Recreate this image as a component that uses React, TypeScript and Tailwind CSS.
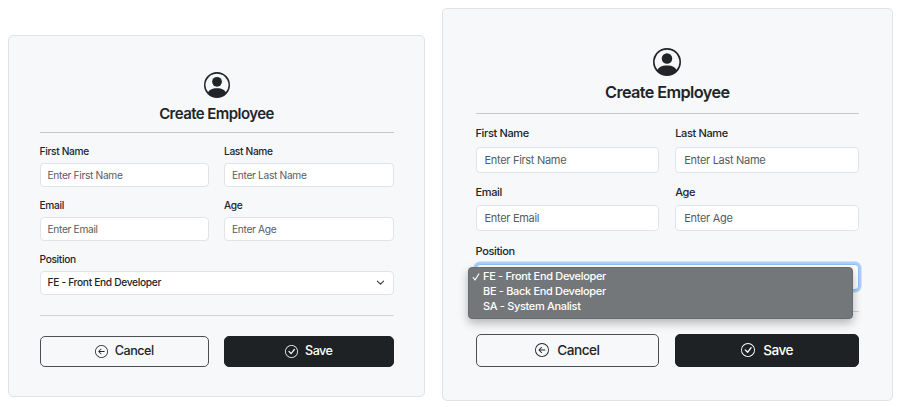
import React from "react";
import { BsArrowLeftCircle, BsCheckCircle, BsPersonCircle } from "react-icons/bs";

const compact = {
  card: "mt-[35px] h-[362px] w-[417px] px-[30.5px] pt-[36px]",
  avatar: "size-[26px]",
  title: "mt-[4px] h-[22px] text-[15px] leading-[24px] tracking-[-0.56px]",
  ruleTop: "mt-[8px]",
  fields: "mt-[9.5px] gap-x-[15px] gap-y-[10px]",
  label: "h-[16px] mb-[4px] text-[10.2px] leading-[16px] tracking-[-0.34px]",
  control: "h-[24px] px-[7px] text-[10.2px] tracking-[-0.32px]",
  ruleBottom: "mt-[20px]",
  actions: "mt-[20px] gap-[15px]",
  button: "h-[31px] gap-[7px] pt-px text-[12.6px] tracking-[-0.5px]",
  buttonIcon: "size-[13px] -mt-px",
};

const large: typeof compact = {
  card: "mt-[8px] h-[392.5px] w-[450.5px] px-[32.5px] pt-[39px]",
  avatar: "size-[28px]",
  title: "mt-[4.5px] h-[24.5px] text-[16.3px] leading-[23px] tracking-[-0.62px]",
  ruleTop: "mt-[8px]",
  fields: "mt-[11px] gap-x-[16px] gap-y-[11.4px]",
  label: "h-[17px] mb-[4.5px] text-[11px] leading-[17px] tracking-[-0.36px]",
  control: "h-[26px] px-[8px] text-[11px] tracking-[-0.3px]",
  ruleBottom: "mt-[21px]",
  actions: "mt-[21.5px] gap-[16px]",
  button: "h-[33px] gap-[8px] text-[13.6px] tracking-[-0.52px]",
  buttonIcon: "size-[14px]",
};

const positions = ["FE - Front End Developer", "BE - Back End Developer", "SA - System Analist"];
const fieldNames = ["First Name", "Last Name", "Email", "Age"];

function PositionMenu() {
  return (
    <ul className="absolute top-[2.5px] -left-[7.5px] h-[52.5px] w-[384.5px] rounded-[4px] border border-[#696c6e] bg-[#747779] pt-[1.5px] text-[11px] font-[450] tracking-[-0.33px] text-white shadow-[0_4px_10px_rgba(0,0,0,0.28)]">
      {positions.map((position, i) => (
        <li key={position} className="flex h-[15px] items-center leading-[15px]">
          <span className="flex w-[14px] justify-center">
            {i === 0 && (
              <svg viewBox="0 0 8 8" className="size-[8px]" fill="none" stroke="currentColor" strokeWidth="1.2" strokeLinecap="round" strokeLinejoin="round">
                <path d="M1.2 4.5 3 7 6.8 1" />
              </svg>
            )}
          </span>
          {position}
        </li>
      ))}
    </ul>
  );
}

function EmployeeForm({ size, open = false }: { size: typeof compact; open?: boolean }) {
  return (
    <form className={`shrink-0 rounded-[5px] border border-[#e0e4e8] bg-[#f7f8fa] ${size.card}`}>
      <header className="flex flex-col items-center">
        <BsPersonCircle className={size.avatar} />
        <h1 className={`font-semibold whitespace-nowrap ${size.title}`}>Create Employee</h1>
      </header>
      <hr className={`border-[#c5c7ca] ${size.ruleTop}`} />
      <div className={`grid grid-cols-2 ${size.fields}`}>
        {fieldNames.map((name) => (
          <label key={name} className="block min-w-0">
            <span className={`block font-[450] ${size.label}`}>{name}</span>
            <input
              placeholder={`Enter ${name}`}
              className={`block w-full rounded-[4px] border border-[#e0e4e8] bg-white placeholder:text-[#565b60] ${size.control}`}
            />
          </label>
        ))}
        <div className="col-span-2">
          <span className={`block font-[450] ${size.label}`}>Position</span>
          <div className="relative">
            <div
              className={`flex items-center justify-between rounded-[4px] border bg-white ${size.control} ${
                open ? "border-[#8fc0f5] shadow-[0_0_0_2.5px_#acd0f6]" : "border-[#e0e4e8]"
              }`}
            >
              {!open && (
                <>
                  <span className="pt-px font-[450]">{positions[0]}</span>
                  <svg viewBox="0 0 16 16" className="mr-px size-[9px]" fill="none" stroke="#343a40" strokeWidth="2" strokeLinecap="round" strokeLinejoin="round">
                    <path d="m2.5 5.5 5.5 5.5 5.5-5.5" />
                  </svg>
                </>
              )}
            </div>
            {open && <PositionMenu />}
          </div>
        </div>
      </div>
      <hr className={`border-[#d0d2d5] ${size.ruleBottom}`} />
      <div className={`grid grid-cols-2 ${size.actions}`}>
        <button type="button" className={`flex items-center justify-center rounded-[5px] border border-[#4b4f53] font-[450] ${size.button}`}>
          <BsArrowLeftCircle className={size.buttonIcon} />
          Cancel
        </button>
        <button type="button" className={`flex items-center justify-center rounded-[5px] border border-[#1e2225] bg-[#1e2225] font-[450] text-white ${size.button}`}>
          <BsCheckCircle className={size.buttonIcon} />
          Save
        </button>
      </div>
    </form>
  );
}

export default function App() {
  return (
    <main className="flex h-[407px] w-[900px] items-start gap-[17px] overflow-hidden bg-white pl-[8px] font-['Inter','Liberation_Sans',sans-serif] text-[#212529]">
      <EmployeeForm size={compact} />
      <EmployeeForm size={large} open />
    </main>
  );
}
